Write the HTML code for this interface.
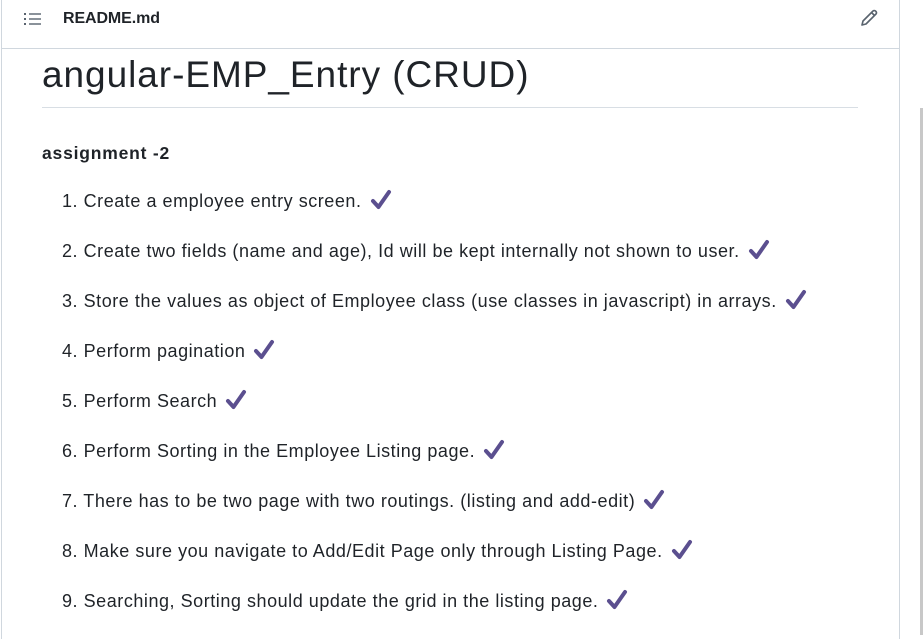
<!DOCTYPE html>
<html><head><style>
body{margin:0;width:923px;height:635px;overflow:hidden;background:#fff;font-family:"Liberation Sans",sans-serif;color:#1f2328;position:relative}
.box{position:absolute;left:1px;top:-1px;width:897px;height:640px;border-left:1px solid #d0d7de;border-right:1px solid #d0d7de}
.hdr{position:absolute;left:0;top:0;width:897px;height:49px;border-bottom:1px solid #d0d7de}
.fn{position:absolute;left:61px;top:11px;font-size:16px;font-weight:bold;letter-spacing:-0.1px}
h1{position:absolute;left:42px;top:53px;margin:0;font-size:37px;font-weight:normal;width:816px;padding-bottom:10px;border-bottom:1px solid #d8dee4;letter-spacing:0.95px;line-height:44px}
.sub{position:absolute;left:42px;top:143px;font-size:17.5px;font-weight:bold;letter-spacing:0.8px}
.it{position:absolute;left:62px;font-size:18px;white-space:nowrap;letter-spacing:0.54px}
.ck{display:inline-block;width:22px;height:22px;margin-left:8px;vertical-align:-4px}
</style></head><body>
<svg width="0" height="0" style="position:absolute"><defs><symbol id="c" viewBox="0 0 22 22"><path d="M3 12 L8.5 18 L19 3" fill="none" stroke="#5b4f8f" stroke-width="4" stroke-linecap="round" stroke-linejoin="round"/></symbol></defs></svg>
<div class="box">
<div class="hdr">
<svg style="position:absolute;left:22px;top:12px" width="18" height="16" viewBox="0 0 18 16" fill="#59636e"><rect x="0" y="2" width="2" height="2"/><rect x="0" y="7" width="2" height="2"/><rect x="0" y="12" width="2" height="2"/><rect x="5" y="2.3" width="12" height="1.4"/><rect x="5" y="7.3" width="12" height="1.4"/><rect x="5" y="12.3" width="12" height="1.4"/></svg>
<div class="fn">README.md</div>
<svg style="position:absolute;left:857px;top:9px" width="20" height="20" viewBox="0 0 20 20" fill="none" stroke="#59636e" stroke-width="1.6" stroke-linejoin="round"><path d="M3 17 L4 13 L14 3 Q15.5 2 17 3.5 Q18 5 17 6 L7 16 Z M12.5 4.5 L15.5 7.5"/></svg>
</div>
</div>
<h1>angular-EMP_Entry (CRUD)</h1>
<div class="sub">assignment -2</div>
<div class="it" style="top:189px">1. Create a employee entry screen.<svg class="ck"><use href="#c"/></svg></div>
<div class="it" style="top:239px">2. Create two fields (name and age), Id will be kept internally not shown to user.<svg class="ck"><use href="#c"/></svg></div>
<div class="it" style="top:289px">3. Store the values as object of Employee class (use classes in javascript) in arrays.<svg class="ck"><use href="#c"/></svg></div>
<div class="it" style="top:339px">4. Perform pagination<svg class="ck"><use href="#c"/></svg></div>
<div class="it" style="top:389px">5. Perform Search<svg class="ck"><use href="#c"/></svg></div>
<div class="it" style="top:439px">6. Perform Sorting in the Employee Listing page.<svg class="ck"><use href="#c"/></svg></div>
<div class="it" style="top:489px">7. There has to be two page with two routings. (listing and add-edit)<svg class="ck"><use href="#c"/></svg></div>
<div class="it" style="top:539px">8. Make sure you navigate to Add/Edit Page only through Listing Page.<svg class="ck"><use href="#c"/></svg></div>
<div class="it" style="top:589px">9. Searching, Sorting should update the grid in the listing page.<svg class="ck"><use href="#c"/></svg></div>
<div style="position:absolute;left:920px;top:108px;width:3px;height:527px;background:#c8c8c8"></div>
</body></html>
